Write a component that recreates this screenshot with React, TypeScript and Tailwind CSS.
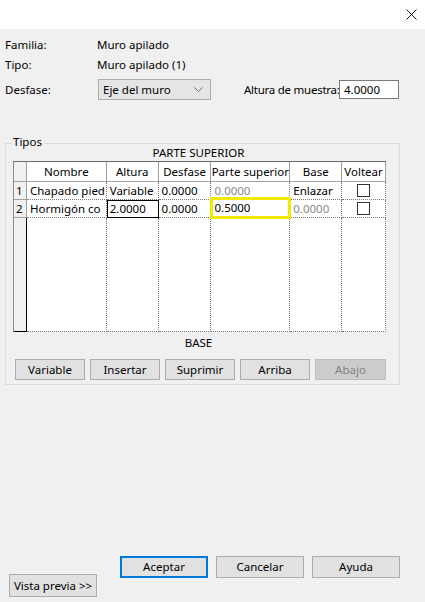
import React from "react";

const cols = [
  { w: "w-[80px]", label: "Nombre" },
  { w: "w-[52px]", label: "Altura" },
  { w: "w-[53px]", label: "Desfase" },
  { w: "w-[79px]", label: "Parte superior" },
  { w: "w-[52px]", label: "Base" },
  { w: "w-[44px]", label: "Voltear" },
];

function Check() {
  return <div className="w-[13px] h-[13px] border border-[#333333] bg-white" />;
}

function Btn({ children, className = "", disabled = false }: { children: React.ReactNode; className?: string; disabled?: boolean }) {
  return (
    <div
      className={
        "flex items-center justify-center border whitespace-nowrap " +
        (disabled ? "bg-[#cccccc] border-[#bfbfbf] text-[#838383] " : "bg-[#e1e1e1] border-[#adadad] text-black ") +
        className
      }
    >
      {children}
    </div>
  );
}

export default function App() {
  const dcell = "h-[18px] border-r border-b border-dotted border-[#7a7a7a] pl-[3px] leading-[17px] whitespace-nowrap overflow-hidden";
  return (
    <div className="w-[425px] h-[602px] bg-[#f0f0f0] flex flex-col text-[11.5px] text-black font-['Segoe_UI','Noto_Sans',sans-serif] overflow-hidden">
      <div className="h-[29px] bg-white flex justify-end items-center pr-[8px]">
        <svg width="11" height="11" viewBox="0 0 11 11">
          <path d="M0.5 0.5 L10.5 10.5 M10.5 0.5 L0.5 10.5" stroke="#111" strokeWidth="1" fill="none" />
        </svg>
      </div>

      <div className="pl-[5px] pt-[8px] whitespace-nowrap">
        <div className="flex h-[16px] items-center">
          <div className="w-[92px]">Familia:</div>
          <div>Muro apilado</div>
        </div>
        <div className="flex h-[16px] items-center mt-[4px]">
          <div className="w-[92px]">Tipo:</div>
          <div>Muro apilado (1)</div>
        </div>
        <div className="flex h-[21px] items-center mt-[6px]">
          <div className="w-[93px] shrink-0">Desfase:</div>
          <div className="w-[113px] shrink-0 h-[21px] border border-[#acacac] bg-[#e5e5e5] flex items-center justify-between pl-[4px] pr-[7px]">
            <span>Eje del muro</span>
            <svg width="9" height="5" viewBox="0 0 9 5">
              <path d="M0.5 0.5 L4.5 4.5 L8.5 0.5" stroke="#707070" strokeWidth="1" fill="none" />
            </svg>
          </div>
          <div className="ml-[33px] w-[95px] shrink-0 tracking-[-0.25px]">Altura de muestra:</div>
          <div className="shrink-0 w-[60px] h-[19px] border border-[#7a7a7a] bg-white flex items-center pl-[4px]">4.0000</div>
        </div>
      </div>

      <div className="relative ml-[5px] mt-[43px] w-[395px] h-[242px] border border-[#dcdcdc]">
        <span className="absolute left-[6px] -top-[10px] px-[1px] bg-[#f0f0f0] leading-[16px]">Tipos</span>
        <div className="h-[17px] leading-[17px] text-center pr-[8px]">PARTE SUPERIOR</div>
        <div className="ml-[7px] w-[373px] h-[171px] flex flex-col border-l border-l-[#8a8a8a] border-t border-t-[#696969] bg-white">
          <div className="flex h-[20px]">
            <div className="w-[13px] h-full bg-[#f0f0f0] border-r border-b border-[#a0a0a0]" />
            {cols.map((c) => (
              <div key={c.label} className={c.w + " h-full border-r border-b border-[#a0a0a0] text-center leading-[19px] whitespace-nowrap overflow-hidden"}>
                {c.label}
              </div>
            ))}
          </div>
          <div className="flex">
            <div className="w-[13px] h-[18px] bg-[#f0f0f0] border-r border-b border-[#a0a0a0] pl-[2px] leading-[17px]">1</div>
            <div className={"w-[80px] " + dcell}>Chapado pied</div>
            <div className={"w-[52px] " + dcell}>Variable</div>
            <div className={"w-[53px] " + dcell}>0.0000</div>
            <div className={"w-[79px] text-[#8a8a8a] " + dcell}>0.0000</div>
            <div className={"w-[52px] " + dcell}>Enlazar</div>
            <div className="w-[44px] h-[18px] border-r border-b border-dotted border-[#7a7a7a] flex items-center justify-center">
              <Check />
            </div>
          </div>
          <div className="flex">
            <div className="w-[13px] h-[18px] bg-[#f0f0f0] border-r border-b border-[#a0a0a0] pl-[2px] leading-[17px]">2</div>
            <div className={"w-[80px] " + dcell}>Hormigón co</div>
            <div className="w-[52px] h-[18px] border border-black pl-[2px] leading-[16px]">2.0000</div>
            <div className={"w-[53px] " + dcell}>0.0000</div>
            <div className="relative w-[79px] h-[18px]">
              <div className="absolute -left-[1px] -top-[3px] w-[81px] h-[22px] border-[3px] border-[#f2ea00] bg-white pl-[1px] leading-[16px]">0.5000</div>
            </div>
            <div className={"w-[52px] text-[#8a8a8a] " + dcell}>0.0000</div>
            <div className="w-[44px] h-[18px] border-r border-b border-dotted border-[#7a7a7a] flex items-center justify-center">
              <Check />
            </div>
          </div>
          <div className="flex flex-1">
            <div className="w-[13px] h-full bg-[#f0f0f0] border-r border-b border-black" />
            {cols.map((c) => (
              <div key={c.label} className={c.w + " h-full border-r border-b border-dotted border-[#7a7a7a]"} />
            ))}
          </div>
        </div>
        <div className="mt-[3px] h-[16px] leading-[16px] text-center pr-[8px]">BASE</div>
        <div className="flex gap-[5px] ml-[9px] mt-[8px]">
          <Btn className="w-[70px] h-[21px]">Variable</Btn>
          <Btn className="w-[70px] h-[21px]">Insertar</Btn>
          <Btn className="w-[70px] h-[21px]">Suprimir</Btn>
          <Btn className="w-[70px] h-[21px]">Arriba</Btn>
          <Btn className="w-[71px] h-[21px]" disabled>
            Abajo
          </Btn>
        </div>
      </div>

      <div className="mt-auto mb-[5px] h-[41px] flex pl-[9px]">
        <Btn className="self-end w-[88px] h-[23px]">Vista previa &gt;&gt;</Btn>
        <div className="self-start ml-[23px] flex gap-[8px]">
          <div className="w-[88px] h-[22px] border-2 border-[#0078d7] bg-[#e1e1e1] flex items-center justify-center">Aceptar</div>
          <Btn className="w-[88px] h-[22px]">Cancelar</Btn>
          <Btn className="w-[88px] h-[22px]">Ayuda</Btn>
        </div>
      </div>
    </div>
  );
}
